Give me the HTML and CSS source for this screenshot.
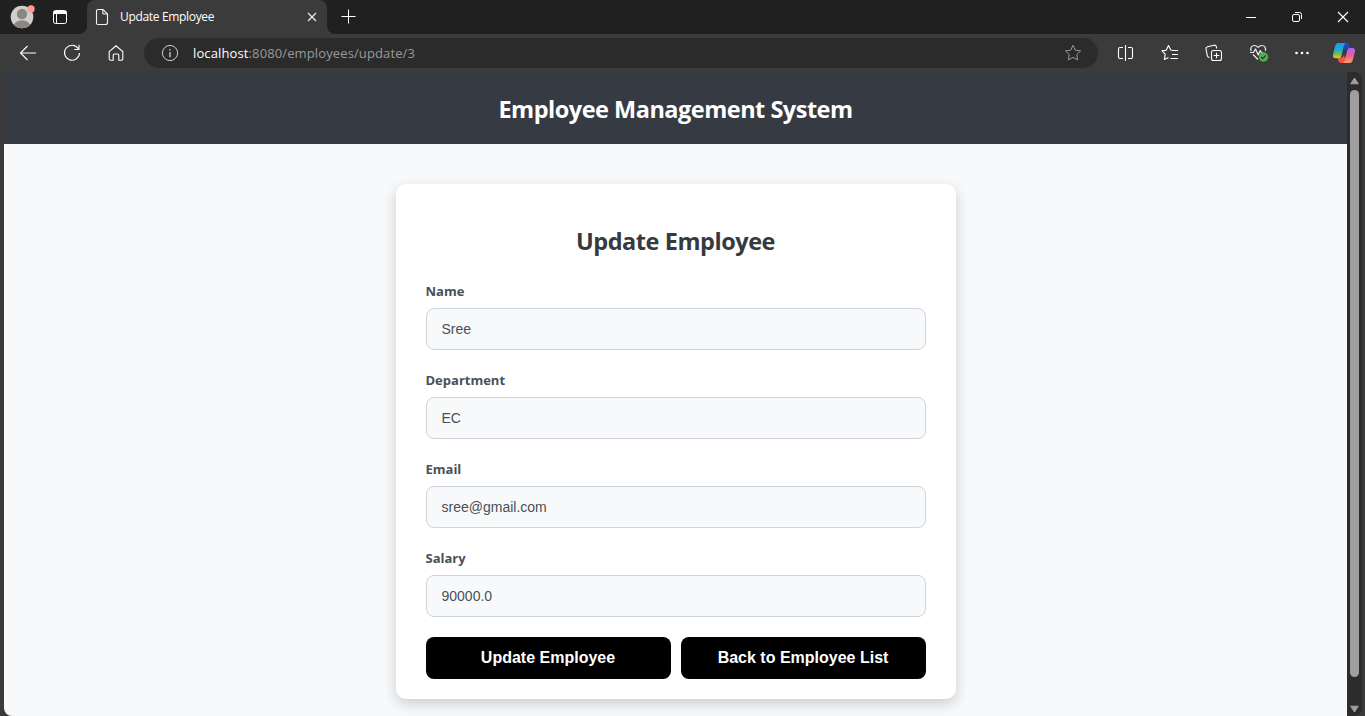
FILE: index.html
```html
<!DOCTYPE html>
<html lang="en">
<head>
<meta charset="utf-8">
<title>Update Employee</title>
<link rel="stylesheet" href="styles.css">
</head>
<body>
<div class="browser">
  <div class="tabstrip">
    <div class="strip-left">
      <svg class="avatar" width="26" height="26" viewBox="0 0 26 26"><defs><clipPath id="av"><circle cx="13" cy="14" r="11.3"/></clipPath></defs><circle cx="13" cy="14" r="11.3" fill="#d2d0ce"/><g clip-path="url(#av)" fill="#8a8784"><circle cx="13" cy="11" r="5.2"/><ellipse cx="13" cy="23.5" rx="8.3" ry="6.3"/></g><circle cx="22" cy="6" r="3.7" fill="#ff9b96"/></svg>
      <svg class="workspace" width="16" height="16" viewBox="0 0 16 16" fill="none" stroke="#fff"><rect x="1.5" y="1.5" width="13" height="13" rx="2"/><path d="M2 2.500h12v2H2z" fill="#fff"/><path d="M4.500 5v9"/></svg>
    </div>
    <div class="tab-slot"><div class="tab">
      <svg width="14" height="18" viewBox="0 0 14 18" fill="none" stroke="#f2f2f2" stroke-width="1.1"><path d="M3 1.500h5l4.500 4.500v8.500a2 2 0 0 1-2 2H3a1.500 1.500 0 0 1-1.500-1.500v-12A1.500 1.500 0 0 1 3 1.500z"/><path d="M7.800 1.500V5a1 1 0 0 0 1 1h3.700"/></svg>
      <span class="tab-title">Update Employee</span>
      <svg class="tab-close" width="10" height="10" viewBox="0 0 10 10" stroke="#eee" stroke-width="1.2"><path d="M1 1l8 8M9 1l-8 8"/></svg>
    </div></div>
    <div class="strip-right">
      <svg class="plus" width="15" height="15" viewBox="0 0 15 15" stroke="#fff"><path d="M7.500 .5v14M.5 7.500h14"/></svg>
      <div class="window-controls">
        <span><svg width="12" height="12" viewBox="0 0 12 12" stroke="#fff"><path d="M1 6.500h10"/></svg></span>
        <span><svg width="12" height="12" viewBox="0 0 12 12" fill="none" stroke="#fff"><rect x="1.500" y="3.500" width="7" height="7" rx="1.500"/><path d="M4 1.500h4.500a2 2 0 0 1 2 2V8"/></svg></span>
        <span><svg width="12" height="12" viewBox="0 0 12 12" stroke="#fff" stroke-width="1.1"><path d="M1 1l10 10M11 1L1 11"/></svg></span>
      </div>
    </div>
  </div>
  <div class="toolbar">
    <span class="tool"><svg width="18" height="18" viewBox="0 0 18 18" fill="none" stroke="#fff" stroke-width="1.1"><path d="M17 9H1.500M8.500 2L1.500 9l7 7"/></svg></span>
    <span class="tool"><svg width="18" height="18" viewBox="0 0 18 18" fill="none" stroke="#fff" stroke-width="1.1"><path d="M15.300 4.600A7.500 7.500 0 1 0 16.500 9M16 .8v4.700h-4.700"/></svg></span>
    <span class="tool"><svg width="18" height="18" viewBox="0 0 18 18" fill="none" stroke="#fff" stroke-width="1.1"><path d="M2.200 7.600L9 1.800l6.800 5.800v7.100a1.500 1.500 0 0 1-1.500 1.500h-2.500v-5a1.200 1.200 0 0 0-1.200-1.200H7.400a1.200 1.200 0 0 0-1.200 1.200v5H3.700a1.500 1.500 0 0 1-1.500-1.500z"/></svg></span>
    <div class="address">
      <svg width="18" height="18" viewBox="0 0 18 18" fill="none" stroke="#ccc"><circle cx="9" cy="9" r="7.600"/><path d="M9 8v5.200M9 5v1.600" stroke-width="1.300"/></svg>
      <span class="url"><b>localhost</b>:8080/employees/update/3</span>
      <svg class="fav" width="18" height="18" viewBox="0 0 18 18" fill="none" stroke="#999" stroke-linejoin="round"><path d="M9 1.300l2.350 4.900 5.250.7-3.850 3.700.95 5.300L9 13.400 4.300 15.900l.95-5.300L1.400 6.900l5.250-.7z"/></svg>
    </div>
    <span class="tool"><svg width="18" height="18" viewBox="0 0 18 18" fill="none" stroke="#fff" stroke-width="1.1"><path d="M8.500 1v16M6 3.500H3a1.500 1.500 0 0 0-1.500 1.500v8A1.500 1.500 0 0 0 3 14.500h3M11 3.500h3a1.500 1.500 0 0 1 1.500 1.500v8a1.500 1.500 0 0 1-1.500 1.500h-3"/></svg></span>
    <span class="tool"><svg width="18" height="18" viewBox="0 0 18 18" fill="none" stroke="#fff" stroke-width="1.1" stroke-linejoin="round"><path d="M11 6.200L9.800 6 7.500 1.500 5.200 6.200l-4.200.7 3.200 3.300-.8 5.300 4.100-2.100M11 6.500h6M11 10.500h6M9.500 14.500H17"/></svg></span>
    <span class="tool"><svg width="18" height="18" viewBox="0 0 18 18" fill="none" stroke="#fff" stroke-width="1.1"><rect x="6.500" y="6.500" width="10" height="10" rx="2"/><path d="M11.500 8.700v5.600M8.700 11.500h5.600M4.500 13.500l-1.200-.6a2 2 0 0 1-1-1.300L1 5a2 2 0 0 1 1.500-2.300L9 1.200a2 2 0 0 1 2.400 1.500l.4 1.800"/></svg></span>
    <span class="tool health"><svg width="20" height="20" viewBox="0 0 20 20" fill="none" stroke="#eee" stroke-width="1.2" stroke-linejoin="round"><path d="M2.200 8C.8 4.700 2.800 2.500 5.300 2.500c1.700 0 2.900.8 3.800 2 .9-1.200 2.100-2 3.800-2 2.600 0 4.500 2.300 3.300 5.300M4 11.500l5 5M1 9.500h3.500L6.500 6l2.700 6 2-4.500 1 2H14"/><circle cx="14.500" cy="14" r="4.700" fill="#4caf50" stroke="none"/><path d="M12.200 14l1.600 1.600 3-3.200" stroke="#243c26"/></svg></span>
    <span class="tool"><svg width="18" height="18" viewBox="0 0 18 18" fill="#fff"><circle cx="3.500" cy="9" r="1.300"/><circle cx="9" cy="9" r="1.300"/><circle cx="14.500" cy="9" r="1.300"/></svg></span>
    <span class="copilot"><svg width="24" height="22" viewBox="0 0 24 22"><defs><linearGradient id="ca" x1="0" y1="0" x2="0" y2="1"><stop offset="0" stop-color="#159cf0"/><stop offset=".45" stop-color="#22aacd"/><stop offset=".75" stop-color="#76bd55"/><stop offset="1" stop-color="#f1cb13"/></linearGradient><linearGradient id="cb" x1="0" y1="0" x2="0" y2="1"><stop offset="0" stop-color="#ae63ef"/><stop offset=".5" stop-color="#ec5d9d"/><stop offset="1" stop-color="#ffa05c"/></linearGradient></defs><path d="M10 1h5c1.500 0 2.100.8 2.500 2l1 3.500h-3c-2 0-2.700 1-3.300 3z" fill="#174bc4"/><path d="M14 21H9c-1.500 0-2.100-.8-2.500-2l-.9-3.500H9c2 0 2.400-1 3-3z" fill="#f65345"/><path d="M6.500 1H14c-1.500.6-1.900 2-2.300 3.300L9.500 13.500c-.5 1.800-1.500 2.700-3 2.700h-3C1.500 16.200.6 14.600 1 12.500L3.200 4C3.700 2 4.800 1 6.500 1z" fill="url(#ca)"/><path d="M17.500 21H10.500c1.500-.6 1.900-2 2.300-3.300L15.200 8.500C15.700 6.800 16.500 6 18 6h2.500c2 0 2.900 1.500 2.500 3.500L20.800 18c-.5 2-1.600 3-3.300 3z" fill="url(#cb)"/></svg></span>
  </div>
  <div class="viewport">
    <div class="page">
      <header class="site-header"><h1>Employee Management System</h1></header>
      <main class="card">
        <h2>Update Employee</h2>
        <form>
          <label for="name">Name</label>
          <input id="name" type="text" value="Sree">
          <label for="department">Department</label>
          <input id="department" type="text" value="EC">
          <label for="email">Email</label>
          <input id="email" type="text" value="sree@gmail.com">
          <label for="salary">Salary</label>
          <input id="salary" type="text" value="90000.0">
          <div class="actions">
            <button type="button">Update Employee</button>
            <button type="button">Back to Employee List</button>
          </div>
        </form>
      </main>
    </div>
    <div class="scrollbar">
      <svg width="11" height="8" viewBox="0 0 11 8"><path d="M5.500 1L9.300 6.800H1.700z" fill="#9f9f9f" stroke="#9f9f9f" stroke-linejoin="round"/></svg>
      <div class="thumb"></div>
      <svg width="11" height="8" viewBox="0 0 11 8"><path d="M5.500 7L9.300 1.200H1.700z" fill="#9f9f9f" stroke="#9f9f9f" stroke-linejoin="round"/></svg>
    </div>
  </div>
</div>
</body>
</html>
```
FILE: styles.css
```css
* { box-sizing: border-box; }
body { margin: 0; overflow: hidden; font-family: "Open Sans", "Noto Sans", sans-serif; }
svg { display: block; flex: none; }
.browser { width: 1365px; height: 716px; display: flex; flex-direction: column; background: #3b3b3b; overflow: hidden; }
.tabstrip { display: flex; height: 34px; flex: none; }
.strip-left { width: 87px; background: #202020; border-bottom-right-radius: 8px; display: flex; padding: 3px 0 0 9px; }
.workspace { margin: 6px 0 0 17px; }
.tab-slot { width: 240px; background: linear-gradient(#202020 50%, #3b3b3b 50%); }
.tab { height: 34px; background: #3b3b3b; border-radius: 8px 8px 0 0; display: flex; align-items: center; padding: 0 10px 0 8px; }
.tab-title { color: #fff; font-size: 12px; line-height: 16px; margin: -1px 0 0 11px; letter-spacing: -0.33px; white-space: nowrap; }
.tab-close { margin-left: auto; }
.strip-right { flex: 1; background: #202020; border-bottom-left-radius: 8px; display: flex; justify-content: space-between; overflow: hidden; }
.plus { margin: 9px 0 0 14px; }
.window-controls { display: flex; margin-right: -1px; }
.window-controls span { width: 46px; display: flex; align-items: center; justify-content: center; }
.toolbar { height: 38px; flex: none; display: flex; align-items: center; padding-left: 6px; }
.tool { width: 44px; flex: none; display: flex; justify-content: center; }
.health { padding-left: 2px; }
.copilot { width: 41px; flex: none; display: flex; justify-content: center; padding-right: 2px; }
.address { width: 954px; height: 30px; margin: 0 6px; flex: none; border-radius: 15px; background: #2b2b2b; display: flex; align-items: center; padding: 0 16px 0 17px; }
.url { color: #999; font-size: 13px; margin-left: 14px; letter-spacing: 0.12px; white-space: nowrap; }
.url b { color: #fff; font-weight: 400; }
.fav { margin-left: auto; }
.viewport { flex: 1; display: flex; padding: 0 3px 0 4px; min-height: 0; }
.page { width: 1343px; background: linear-gradient(#363a43 72px, #f8f9fb 72px); border-radius: 8px 0 0 8px; overflow: hidden; }
.site-header { height: 72px; display: flex; justify-content: center; align-items: center; padding-top: 2px; }
h1 { margin: 0; color: #fff; font-size: 23.5px; font-weight: 700; letter-spacing: -0.5px; white-space: nowrap; }
.card { width: 560px; height: 515px; margin: 40px auto 0; padding: 39px 30px 20px; background: #fff; border-radius: 10px; box-shadow: 0 5px 14px rgba(0, 0, 0, .18); }
h2 { margin: 0 0 23px; height: 36px; line-height: 36px; text-align: center; color: #343a40; font-size: 23.5px; font-weight: 700; letter-spacing: -0.45px; }
label { display: block; height: 19px; line-height: 19px; margin-bottom: 7px; color: #495057; font-size: 13px; font-weight: 700; }
input { display: block; width: 500px; height: 42px; margin: 0 0 21px; padding: 0 15px; border: 1px solid #ced4da; border-radius: 8px; background: #f8f9fb; color: #495057; font: 14px "Liberation Sans", Arial, sans-serif; }
.actions { display: flex; gap: 10px; margin-top: -1px; }
button { flex: 1; height: 42px; border: 0; border-radius: 8px; padding: 0; background: #000; color: #fff; font: bold 16px "Liberation Sans", Arial, sans-serif; }
.scrollbar { width: 15px; background: #2c2c2c; border-radius: 0 8px 8px 0; display: flex; flex-direction: column; align-items: center; padding: 5px 0 3px; }
.thumb { width: 9px; height: 587px; margin: 5px 0 auto; border-radius: 5px; background: #9f9f9f; }
```
